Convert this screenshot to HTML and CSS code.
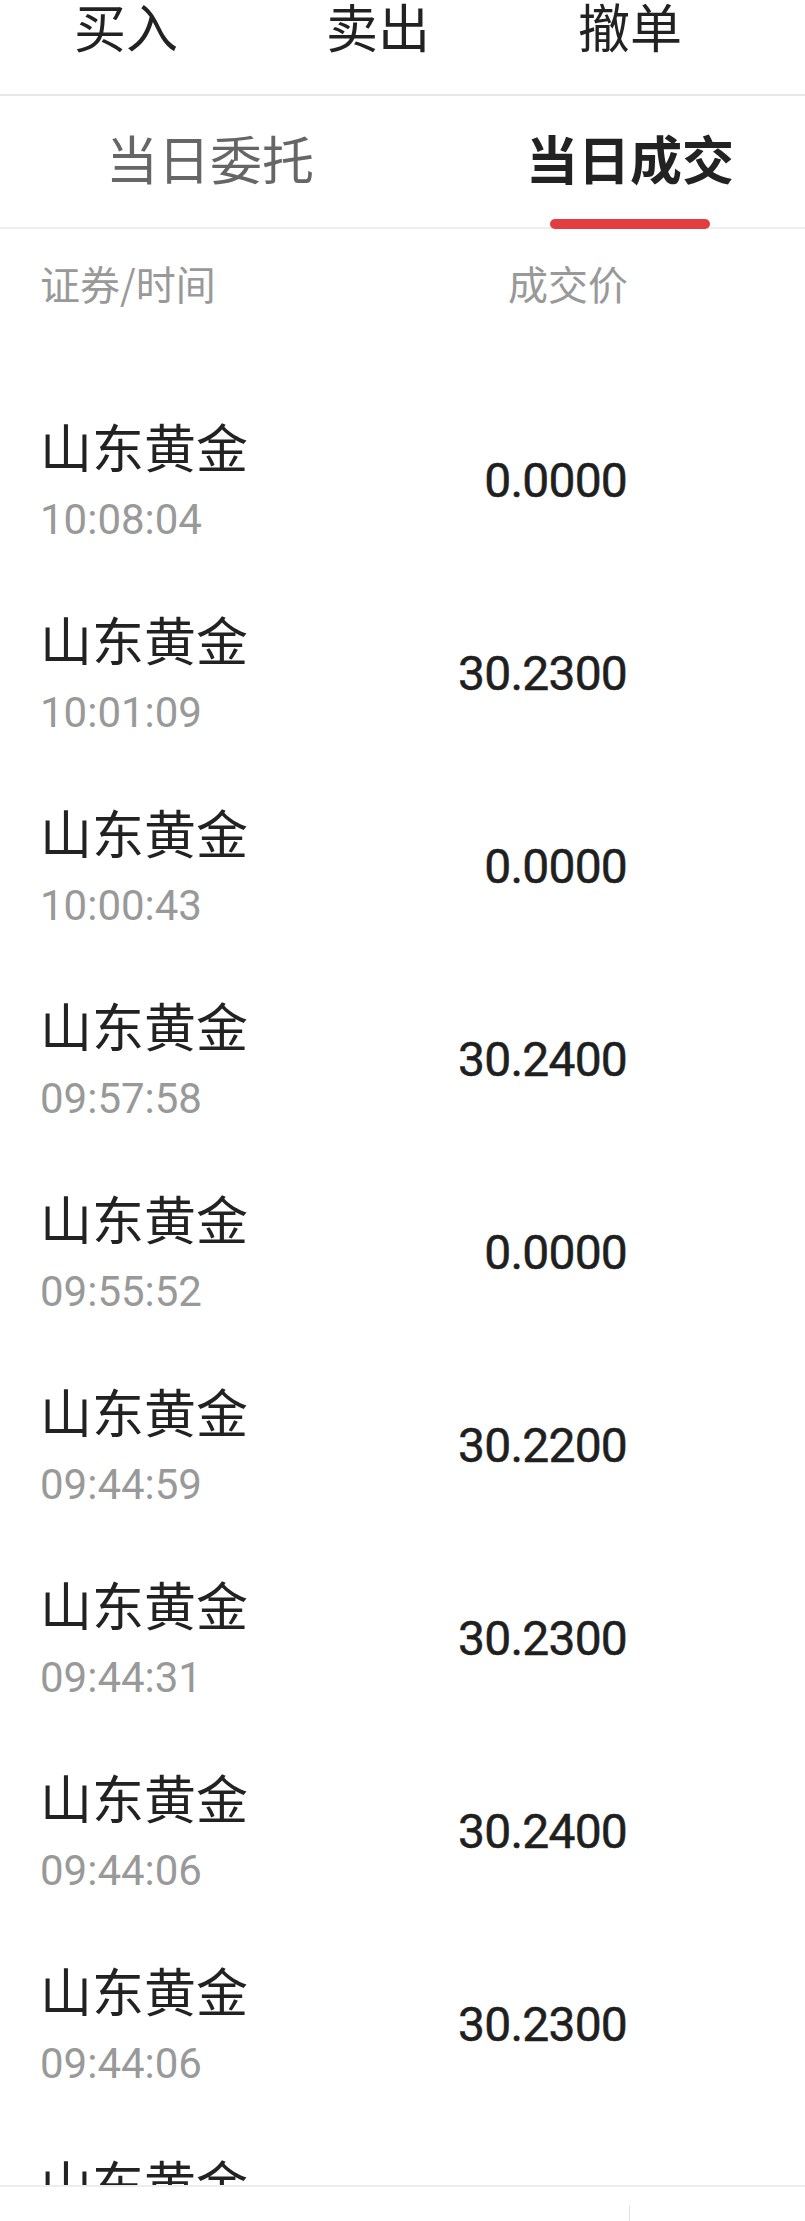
FILE: index.html
```html
<!DOCTYPE html>
<html lang="zh-CN">
<head>
<meta charset="utf-8">
<title>当日成交</title>
<link rel="stylesheet" href="styles.css">
</head>
<body>
<div class="page">
  <nav class="toptabs">
    <div class="toptab">买入</div>
    <div class="toptab">卖出</div>
    <div class="toptab">撤单</div>
  </nav>
  <div class="subtabs">
    <div class="subtab">当日委托<span class="bar bar-off"></span></div>
    <div class="subtab active">当日成交<span class="bar"></span></div>
  </div>
  <div class="thead">
    <span>证券/时间</span>
    <span>成交价</span>
  </div>
  <ul class="list">
    <li class="row"><div class="sec"><div class="name">山东黄金</div><div class="time">10:08:04</div></div><div class="price">0.0000</div></li>
    <li class="row"><div class="sec"><div class="name">山东黄金</div><div class="time">10:01:09</div></div><div class="price">30.2300</div></li>
    <li class="row"><div class="sec"><div class="name">山东黄金</div><div class="time">10:00:43</div></div><div class="price">0.0000</div></li>
    <li class="row"><div class="sec"><div class="name">山东黄金</div><div class="time">09:57:58</div></div><div class="price">30.2400</div></li>
    <li class="row"><div class="sec"><div class="name">山东黄金</div><div class="time">09:55:52</div></div><div class="price">0.0000</div></li>
    <li class="row"><div class="sec"><div class="name">山东黄金</div><div class="time">09:44:59</div></div><div class="price">30.2200</div></li>
    <li class="row"><div class="sec"><div class="name">山东黄金</div><div class="time">09:44:31</div></div><div class="price">30.2300</div></li>
    <li class="row"><div class="sec"><div class="name">山东黄金</div><div class="time">09:44:06</div></div><div class="price">30.2400</div></li>
    <li class="row"><div class="sec"><div class="name">山东黄金</div><div class="time">09:44:06</div></div><div class="price">30.2300</div></li>
    <li class="row"><div class="sec"><div class="name">山东黄金</div></div></li>
  </ul>
  <footer class="footer">
    <div class="foot-cell foot-left"></div>
    <div class="foot-cell"></div>
  </footer>
</div>
</body>
</html>
```
FILE: styles.css
```css
html, body {
  margin: 0;
  padding: 0;
  background: #ffffff;
}

.page {
  position: relative;
  width: 805px;
  height: 2221px;
  overflow: hidden;
  font-family: "Noto Sans CJK SC", "Noto Sans", sans-serif;
  color: #222222;
}

.toptabs {
  display: grid;
  grid-template-columns: repeat(3, 252px);
  height: 96px;
  box-shadow: inset 0 -2px 0 #e8e8e8;
}

.toptab {
  font-size: 52px;
  line-height: 52px;
  text-align: center;
  color: #222222;
}

.subtabs {
  display: grid;
  grid-template-columns: 420px 420px;
  height: 133px;
  box-shadow: inset 0 -2px 0 #eeeeee;
}

.subtab {
  display: flex;
  flex-direction: column;
  align-items: center;
  justify-content: space-between;
  padding-top: 36px;
  font-size: 52px;
  line-height: 52px;
  color: #666666;
}

.subtab.active {
  color: #222222;
  font-weight: 700;
}

.bar {
  display: block;
  width: 160px;
  height: 10px;
  border-radius: 5px;
  background: #e33d43;
}

.bar-off {
  visibility: hidden;
}

.thead {
  box-sizing: border-box;
  height: 155px;
  padding: 34px 177px 0 40px;
  display: flex;
  justify-content: space-between;
  align-items: flex-start;
  font-size: 40px;
  line-height: 40px;
  color: #999999;
}

.list {
  list-style: none;
  margin: 0;
  padding: 0;
}

.row {
  box-sizing: border-box;
  height: 193px;
  padding: 0 178px 0 40px;
  display: flex;
  align-items: center;
  justify-content: space-between;
}

.sec {
  display: flex;
  flex-direction: column;
  min-height: 121px;
}

.name {
  font-size: 52px;
  line-height: 52px;
  color: #222222;
}

.time {
  margin-top: 27px;
  font-family: Roboto, "Noto Sans", sans-serif;
  font-size: 42px;
  line-height: 42px;
  color: #999999;
}

.price {
  font-family: Roboto, "Noto Sans", sans-serif;
  font-weight: 400;
  font-size: 48px;
  line-height: 48px;
  letter-spacing: -0.8px;
  color: #1f1f1f;
  -webkit-text-stroke: 0.5px #1f1f1f;
}

.footer {
  position: absolute;
  left: 0;
  right: 0;
  bottom: 0;
  height: 34px;
  background: #ffffff;
  border-top: 2px solid #ededed;
  display: flex;
}

.foot-cell {
  flex: 1;
}

.foot-left {
  flex: 0 0 630px;
  margin-top: 18px;
  border-right: 1px solid #e2e2e2;
  box-sizing: border-box;
}
```
